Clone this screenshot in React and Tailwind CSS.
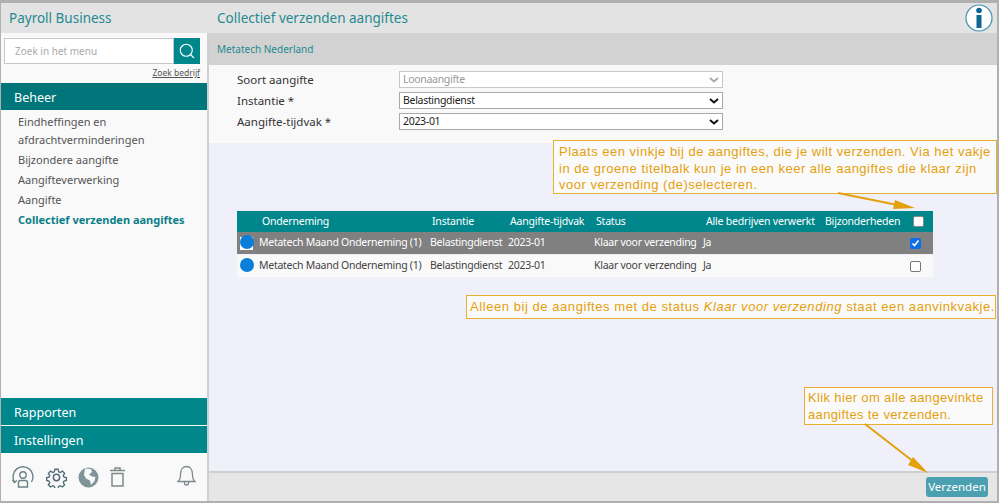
import { Search } from 'lucide-react';

const menuItems = ['Bijzondere aangifte', 'Aangifteverwerking', 'Aangifte'];
const selectCls = 'w-[324px] h-[17px] border border-[#a9a9a9] bg-white text-[10.5px] tracking-[-0.3px] text-[#222] pl-[3px] flex items-center justify-between pr-[3px]';

function Chevron({ color = '#111' }) {
  return (
    <svg width="10" height="6" viewBox="0 0 10 6" fill="none" stroke={color} strokeWidth="2">
      <path d="M1 1l4 3.500L9 1" />
    </svg>
  );
}

function FormRow({ label, value, disabled }) {
  return (
    <div className="flex items-center h-[21px]">
      <div className="w-[162px] text-[11.500px] text-[#333]">{label}</div>
      <div className={`${selectCls} ${disabled ? 'bg-[#ecebe4] text-[#999] border-[#c8c8c8]' : ''}`}>
        <span>{value}</span>
        <Chevron color={disabled ? '#aaa' : '#111'} />
      </div>
    </div>
  );
}

function Row({ selected }) {
  return (
    <div className={`flex items-center h-[22px] text-[10.5px] tracking-[-0.27px] whitespace-nowrap ${selected ? 'bg-[#808080] text-white' : 'bg-[#f9f9f9] text-[#444] mt-px'}`}>
      <div className="w-[193px] flex-none flex items-center pl-[3px] gap-[5px] relative">
        {selected && <div className="absolute left-[3px] top-[2px] w-[13px] h-[13px] bg-white" />}
        <div className="relative flex-none w-[14px] h-[14px] rounded-full bg-[#0a7fd9] -mt-[3px]" />
        <span>Metatech Maand Onderneming (1)</span>
      </div>
      <div className="w-[78px] flex-none">Belastingdienst</div>
      <div className="w-[86px] flex-none">2023-01</div>
      <div className="w-[109px] flex-none">Klaar voor verzending</div>
      <div className="w-[207px] flex-none">Ja</div>
      {selected ? (
        <div className="flex-none w-[11px] h-[11px] rounded-[2px] bg-[#0a6fe8] flex items-center justify-center">
          <svg width="9" height="9" viewBox="0 0 9 9" fill="none" stroke="white" strokeWidth="1.6"><path d="M1.500 4.500l2 2 4-5" /></svg>
        </div>
      ) : (
        <div className="flex-none w-[11px] h-[11px] rounded-[2px] border border-[#777] bg-white" />
      )}
    </div>
  );
}

function Callout({ className, children }) {
  return (
    <div className={`absolute border border-[#e8b030] bg-[#fafafa] text-[#e5a00d] text-[13px] leading-[16.500px] font-['Liberation_Sans',sans-serif] whitespace-nowrap ${className}`}>
      {children}
    </div>
  );
}

export default function App() {
  return (
    <div className="relative w-[999px] h-[503px] flex flex-col border-t-[3px] border-l border-r-2 border-b-2 border-[#b0b0b0] bg-white font-['Noto_Sans',sans-serif] overflow-hidden">
      {/* Top bar */}
      <div className="h-[30px] flex-none flex items-center bg-[#e3e3e3] text-[#1f8a90] text-[13.500px]">
        <div className="w-[208px] pl-[8px]">Payroll Business</div>
        <div className="pl-[8px] flex-1">Collectief verzenden aangiftes</div>
        <svg className="mr-[4px]" width="28" height="28" viewBox="0 0 28 28">
          <circle cx="14" cy="14" r="13" fill="white" stroke="#3d8fb0" strokeWidth="1.2" />
          <circle cx="14" cy="6.500" r="2.800" fill="#0f6796" />
          <rect x="11.500" y="11" width="5" height="13" fill="#0f6796" />
        </svg>
      </div>

      <div className="flex flex-1 min-h-0">
        {/* Sidebar */}
        <div className="w-[208px] flex-none flex flex-col bg-[#f9f9f9] border-r-2 border-[#cfcfcf]">
          <div className="flex mt-[5px] ml-[3px] h-[26px] w-[196px]">
            <div className="flex-1 border border-[#c4c8ca] bg-white text-[10px] text-[#aaa] pl-[10px] flex items-center">Zoek in het menu</div>
            <div className="w-[26px] bg-[#00878c] flex items-center justify-center">
              <Search size={18} color="white" strokeWidth={1.5} />
            </div>
          </div>
          <div className="text-[8.500px] text-[#555] underline text-right pr-[7px] mt-[2px] leading-[14px]">Zoek bedrijf</div>
          <div className="mt-[3px] h-[27px] pt-[3px] bg-[#00757a] text-white text-[12.500px] pl-[13px] flex items-center">Beheer</div>
          <div className="pl-[17px] pt-[3px] text-[11px] leading-[18px] text-[#555]">
            <div>Eindheffingen en</div>
            <div className="mb-[1px]">afdrachtverminderingen</div>
            {menuItems.map((item) => (
              <div key={item} className="h-[20px] flex items-center">{item}</div>
            ))}
            <div className="h-[20px] flex items-center font-bold text-[#0b7f88] whitespace-nowrap">Collectief verzenden aangiftes</div>
          </div>
          <div className="flex-1" />
          <div className="h-[27px] pt-[3px] bg-[#00878c] text-white text-[12.500px] pl-[13px] flex items-center">Rapporten</div>
          <div className="h-[27px] pt-[3px] mt-px bg-[#00878c] text-white text-[12.500px] pl-[13px] flex items-center">Instellingen</div>
          <div className="h-[48px] flex-none relative flex items-center pl-[10px] gap-[11px]">
            <svg width="24" height="24" viewBox="0 0 24 24" fill="none" stroke="#6b8288" strokeWidth="1.4">
              <path d="M3.500 17A10 10 0 1 1 20.500 17" />
              <path d="M1.500 15l2 2.500 2.500-2" />
              <circle cx="12" cy="10" r="3.200" />
              <path d="M7.500 22v-4.500a2 2 0 0 1 2-2h5a2 2 0 0 1 2 2V22z" />
            </svg>
            <svg width="21" height="21" viewBox="0 0 24 24" fill="none" stroke="#4f6a78" strokeWidth="1.7">
              <circle cx="12" cy="12" r="3.600" />
              <path d="M10 1.500h4l.7 3.200 2 .9 2.800-1.700 2.800 2.800-1.700 2.800.9 2 3 .7v3.600l-3 .7-.9 2 1.700 2.800-2.800 2.800-2.800-1.700-2 .9-.7 3h-4l-.7-3-2-.9-2.800 1.700-2.800-2.800 1.700-2.800-.9-2-3-.7v-3.600l3-.7.9-2-1.700-2.800 2.800-2.800 2.800 1.700 2-.9z" transform="translate(1.200 1.200) scale(.9)" />
            </svg>
            <svg width="21" height="21" viewBox="0 0 21 21">
              <circle cx="10.500" cy="10.500" r="10" fill="#7f9498" />
              <path d="M7 1.500l6 .5 1 3-3 2.500 3 2 3.500.5-1 4-3.500 4-1-4.500-4-2-2-3.500z" fill="#f9f9f9" />
            </svg>
            <svg width="15" height="20" viewBox="0 0 15 20" fill="none" stroke="#7d8a8c" strokeWidth="1.5">
              <path d="M0 3.500h15M5 3.500V1h5v2.500M2 6.500h11V19H2z" />
            </svg>
            <svg className="absolute left-[176px] top-[12px]" width="19" height="21" viewBox="0 0 19 21" fill="none" stroke="#7d8a8c" strokeWidth="1.3">
              <path d="M1 16.500c2-1.500 2.500-3 2.500-7C3.500 4.500 6 1.500 9.500 1.500s6 3 6 8c0 4 .5 5.500 2.500 7z" />
              <path d="M7.500 16.500v1.500a2 2 0 0 0 4 0v-1.500" />
            </svg>
          </div>
        </div>

        {/* Main */}
        <div className="flex-1 min-w-0 flex flex-col bg-[#eff0f9]">
          <div className="h-[32px] flex-none bg-[#d2d2d2] text-[#1f8a90] text-[10px] pl-[8px] flex items-center">Metatech Nederland</div>
          <div className="h-[78px] flex-none bg-[#f9f9f9] pl-[28px] pt-[4px]">
            <FormRow label="Soort aangifte" value="Loonaangifte" disabled />
            <FormRow label="Instantie *" value="Belastingdienst" />
            <FormRow label="Aangifte-tijdvak *" value="2023-01" />
          </div>
          <div className="flex-1 pl-[28px] pt-[68px]">
            <div className="w-[696px]">
              <div className="flex items-center h-[21px] bg-[#00878c] text-white text-[10.5px] tracking-[-0.2px] whitespace-nowrap">
                <div className="w-[195px] flex-none pl-[25px]">Onderneming</div>
                <div className="w-[78px] flex-none">Instantie</div>
                <div className="w-[86px] flex-none">Aangifte-tijdvak</div>
                <div className="w-[110px] flex-none">Status</div>
                <div className="w-[119px] flex-none">Alle bedrijven verwerkt</div>
                <div className="w-[88px] flex-none">Bijzonderheden</div>
                <div className="flex-none w-[11px] h-[11px] rounded-[2px] bg-white border border-[#888]" />
              </div>
              <Row selected />
              <Row />
            </div>
          </div>
          <div className="h-[30px] flex-none bg-[#e6e6e6] border-t-2 border-[#cfcfcf] flex items-center justify-end pr-[9px]">
            <div className="h-[20px] w-[62px] rounded-[3px] bg-[#4a9fb0] text-white text-[11.500px] flex items-center justify-center">Verzenden</div>
          </div>
        </div>
      </div>

      {/* Annotations */}
      <Callout className="left-[552px] top-[137px] w-[444px] h-[54px] pl-[5px] pt-[3px] tracking-[0.5px]">
        Plaats een vinkje bij de aangiftes, die je wilt verzenden. Via het vakje<br />
        in de groene titelbalk kun je in een keer alle aangiftes die klaar zijn<br />
        voor verzending (de)selecteren.
      </Callout>
      <Callout className="left-[465px] top-[292px] w-[530px] h-[24px] pl-[3px] flex items-center whitespace-pre tracking-[0.56px]">
        Alleen bij de aangiftes met de status <i>Klaar voor verzending</i> staat een aanvinkvakje.
      </Callout>
      <Callout className="left-[803px] top-[384px] w-[189px] h-[38px] pl-[3px] pt-[2px] tracking-[0.35px]">
        Klik hier om alle aangevinkte<br />aangiftes te verzenden.
      </Callout>
      <svg className="absolute left-0 top-0 pointer-events-none" width="999" height="503" viewBox="1 3 999 503">
        <path d="M838 193l62 12.500" stroke="#e5a00d" strokeWidth="2" fill="none" />
        <path d="M915 208l-20-8-2 9z" fill="#e5a00d" />
        <path d="M865 424l58 45" stroke="#e5a00d" strokeWidth="2" fill="none" />
        <path d="M928 473l-15-16-5 8z" fill="#e5a00d" />
      </svg>
    </div>
  );
}
